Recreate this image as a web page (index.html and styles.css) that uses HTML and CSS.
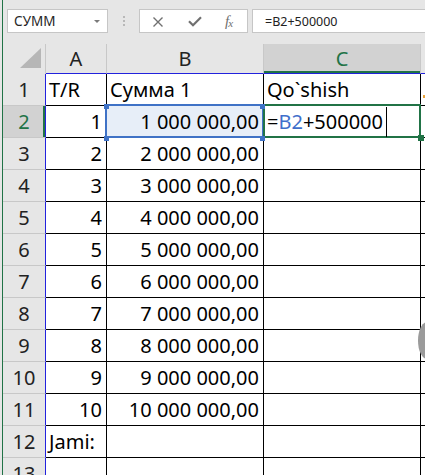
FILE: index.html
```html
<!DOCTYPE html>
<html>
<head>
<meta charset="utf-8">
<link rel="stylesheet" href="styles.css">
</head>
<body>
<div class="app">
  <div class="edge"></div>
  <div class="main">
    <div class="toolbar">
      <div class="namebox"><span class="name">СУММ</span><span class="dd"></span></div>
      <div class="grip"><i></i><i></i><i></i></div>
      <div class="btns">
        <svg class="ic-x" width="12" height="12" viewBox="0 0 12 12"><path d="M1.5 1.5 L10.5 10.5 M10.5 1.5 L1.5 10.5" stroke="#707070" stroke-width="1.4" fill="none"/></svg>
        <svg class="ic-ok" width="14" height="11" viewBox="0 0 14 11"><path d="M1 5.2 L5 9.2 L13 1.2" stroke="#707070" stroke-width="2.2" fill="none"/></svg>
        <span class="fx"><span class="fx-f">f</span><span class="fx-x">x</span></span>
      </div>
      <div class="fbox">=B2+500000</div>
    </div>
    <div class="sheet">
      <div class="corner"><svg width="42" height="29" viewBox="0 0 42 29"><polygon points="17,24 38,4 38,24" fill="#b6b6b6"/></svg></div>
      <div class="ch">A</div><div class="ch">B</div><div class="ch sel">C</div><div class="ch last"></div>

      <div class="rh">1</div><div class="c">T/R</div><div class="c">Сумма 1</div><div class="c">Qo`shish</div><div class="c d"></div>
      <div class="rh sel">2</div><div class="c r">1</div><div class="c r hl">1 000 000,00</div><div class="c">=<span class="reftxt">B2</span>+500000</div><div class="c d"></div>
      <div class="rh">3</div><div class="c r">2</div><div class="c r">2 000 000,00</div><div class="c"></div><div class="c d"></div>
      <div class="rh">4</div><div class="c r">3</div><div class="c r">3 000 000,00</div><div class="c"></div><div class="c d"></div>
      <div class="rh">5</div><div class="c r">4</div><div class="c r">4 000 000,00</div><div class="c"></div><div class="c d"></div>
      <div class="rh">6</div><div class="c r">5</div><div class="c r">5 000 000,00</div><div class="c"></div><div class="c d"></div>
      <div class="rh">7</div><div class="c r">6</div><div class="c r">6 000 000,00</div><div class="c"></div><div class="c d"></div>
      <div class="rh">8</div><div class="c r">7</div><div class="c r">7 000 000,00</div><div class="c"></div><div class="c d"></div>
      <div class="rh">9</div><div class="c r">8</div><div class="c r">8 000 000,00</div><div class="c"></div><div class="c d"></div>
      <div class="rh">10</div><div class="c r">9</div><div class="c r">9 000 000,00</div><div class="c"></div><div class="c d"></div>
      <div class="rh">11</div><div class="c r">10</div><div class="c r">10 000 000,00</div><div class="c"></div><div class="c d"></div>
      <div class="rh">12</div><div class="c">Jami:</div><div class="c"></div><div class="c"></div><div class="c d"></div>
      <div class="rh">13</div><div class="c"></div><div class="c"></div><div class="c"></div><div class="c d"></div>

      <div class="refbox"></div>
      <div class="activebox"></div>
      <div class="ghandle"></div>
      <div class="bh h1"></div><div class="bh h2"></div><div class="bh h3"></div><div class="bh h4"></div>
      <div class="caret"></div>
      <div class="orange"></div>
      <div class="oval"></div>
    </div>
  </div>
</div>
</body>
</html>
```
FILE: styles.css
```css
html, body {
  margin: 0;
  padding: 0;
  background: #ffffff;
}
body {
  width: 425px;
  height: 475px;
  overflow: hidden;
}
.app {
  display: flex;
  width: 425px;
  height: 475px;
  overflow: hidden;
}
.edge {
  width: 2px;
  flex: none;
  background: #e6e6e6;
  border-right: 1px solid #217346;
}
.main {
  flex: 1;
  display: flex;
  flex-direction: column;
  min-width: 0;
}
.toolbar {
  height: 44px;
  flex: none;
  box-sizing: border-box;
  background: #e6e6e6;
  display: flex;
  align-items: flex-start;
  padding: 9px 0 0 4px;
  font-family: "Noto Sans", "Open Sans", sans-serif;
}
.namebox {
  width: 101px;
  height: 24px;
  box-sizing: border-box;
  border: 1px solid #c6c6c6;
  background: #fff;
  display: flex;
  align-items: center;
  justify-content: space-between;
  padding: 0 7px 0 6px;
  flex: none;
}
.name {
  font-size: 13.5px;
  color: #262626;
  line-height: 22px;
}
.dd {
  width: 0;
  height: 0;
  border-left: 3px solid transparent;
  border-right: 3px solid transparent;
  border-top: 3px solid #7a7a7a;
}
.grip {
  width: 31px;
  height: 24px;
  flex: none;
  display: flex;
  flex-direction: column;
  align-items: center;
  justify-content: center;
  gap: 2px;
}
.grip i {
  display: block;
  width: 2px;
  height: 2px;
  background: #b8b8b8;
}
.btns {
  width: 109px;
  height: 24px;
  box-sizing: border-box;
  border: 1px solid #c6c6c6;
  background: #fff;
  display: flex;
  align-items: center;
  padding-left: 12px;
  flex: none;
}
.ic-x {
  display: block;
  margin-top: 1px;
}
.ic-ok {
  display: block;
  margin-left: 24px;
  margin-top: 1px;
}
.fx {
  margin-left: 23px;
  font-family: "Liberation Serif", "DejaVu Serif", serif;
  font-style: italic;
  color: #707070;
  display: flex;
  align-items: baseline;
  line-height: 1;
}
.fx-f {
  font-size: 15px;
}
.fx-x {
  font-size: 11px;
  position: relative;
  top: 1px;
  margin-left: -1px;
}
.fbox {
  flex: 1;
  margin-left: 4px;
  height: 24px;
  box-sizing: border-box;
  border: 1px solid #c6c6c6;
  border-right: none;
  background: #fff;
  padding-left: 12px;
  display: flex;
  align-items: center;
  font-size: 12.5px;
  color: #222;
}
.sheet {
  flex: 1;
  position: relative;
  overflow: hidden;
  display: grid;
  grid-template-columns: 43px 61px 157px 157px 1fr;
  grid-template-rows: 30px repeat(13, 32px);
  font-family: "Noto Sans", "Open Sans", sans-serif;
  font-size: 20px;
}
.corner {
  background: #e6e6e6;
  border-right: 1px solid #c8c8c8;
  box-sizing: border-box;
}
.corner svg {
  display: block;
}
.ch {
  background: #e6e6e6;
  border-right: 1px solid #c8c8c8;
  border-bottom: 1px solid #2222dd;
  box-sizing: border-box;
  text-align: center;
  line-height: 29px;
  color: #222;
}
.ch.last {
  border-right: none;
}
.ch.sel {
  background: #d2d2d2;
  color: #217346;
  box-shadow: inset 0 -2px 0 #217346;
}
.rh {
  background: #e6e6e6;
  border-right: 1px solid #2222dd;
  border-bottom: 1px solid #c8c8c8;
  box-sizing: border-box;
  text-align: center;
  line-height: 31px;
  color: #222;
}
.rh.sel {
  background: #d2d2d2;
  color: #217346;
  box-shadow: inset -2px 0 0 #217346;
}
.c {
  border-right: 1px solid #000;
  border-bottom: 1px solid #000;
  box-sizing: border-box;
  line-height: 31px;
  padding: 0 3px;
  white-space: nowrap;
  overflow: hidden;
  color: #000;
  background: #fff;
}
.c.r {
  text-align: right;
  padding-right: 4px;
}
.c.d {
  border-right: none;
}
.c.hl {
  background: #e7eef8;
}
.reftxt {
  color: #3f6fcb;
}
.refbox {
  position: absolute;
  left: 102px;
  top: 60px;
  width: 159px;
  height: 34px;
  box-sizing: border-box;
  border: 2px solid #3f72c6;
}
.activebox {
  position: absolute;
  left: 260px;
  top: 60px;
  width: 158px;
  height: 34px;
  box-sizing: border-box;
  border: 2px solid #217346;
}
.ghandle {
  position: absolute;
  left: 415px;
  top: 91px;
  width: 6px;
  height: 6px;
  background: #217346;
}
.bh {
  position: absolute;
  width: 5px;
  height: 5px;
  background: #3f72c6;
}
.h1 { left: 101px; top: 60px; }
.h2 { left: 101px; top: 92px; }
.h3 { left: 257px; top: 60px; }
.h4 { left: 257px; top: 92px; }
.caret {
  position: absolute;
  left: 383px;
  top: 63px;
  width: 1px;
  height: 30px;
  background: #000;
}
.orange {
  position: absolute;
  left: 420px;
  top: 51px;
  width: 2px;
  height: 3px;
  background: #e9a23b;
}
.oval {
  position: absolute;
  left: 415px;
  top: 278px;
  width: 18px;
  height: 37px;
  border-radius: 50%;
  background: #9b9b9b;
}
```
